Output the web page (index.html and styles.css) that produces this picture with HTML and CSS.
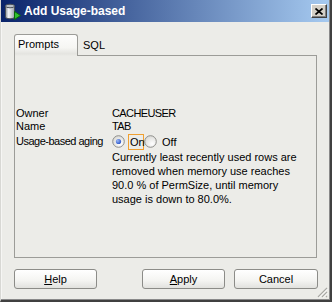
FILE: index.html
```html
<!DOCTYPE html>
<html>
<head>
<meta charset="utf-8">
<title>Add Usage-based</title>
<link rel="stylesheet" href="styles.css">
</head>
<body>
<div class="win">
  <div class="titlebar">
    <svg class="ticon" width="18" height="18" viewBox="0 0 18 18">
      <defs>
        <linearGradient id="cyl" x1="0" y1="0" x2="1" y2="0">
          <stop offset="0" stop-color="#8c949c"/>
          <stop offset="0.35" stop-color="#f4f6f8"/>
          <stop offset="1" stop-color="#9aa2aa"/>
        </linearGradient>
      </defs>
      <path d="M1.5 3 V14 A4.5 1.8 0 0 0 10.5 14 V3 Z" fill="url(#cyl)" stroke="#4a5058"/>
      <ellipse cx="6" cy="3" rx="4.5" ry="1.8" fill="#b8c0c8" stroke="#4a5058"/>
      <path d="M10.5 8.5 L16.5 12.5 L10.5 16.5 Z" fill="#2fc02f" stroke="#0a6a0a" stroke-linejoin="round"/>
    </svg>
    <span class="ttext">Add Usage-based</span>
    <div class="close">
      <svg width="8" height="7" viewBox="0 0 8 7"><path d="M0.5 0.5 L7.5 6.5 M7.5 0.5 L0.5 6.5" stroke="#000" stroke-width="1.7"/></svg>
    </div>
  </div>
  <div class="content">
    <div class="tabs">
      <div class="tab sel">Prompts</div>
      <div class="tab">SQL</div>
    </div>
    <div class="panel">
      <div class="form">
        <div class="lbl">Owner</div><div class="val caps">CACHEUSER</div>
        <div class="lbl">Name</div><div class="val caps">TAB</div>
        <div class="lbl tall">Usage-based aging</div>
        <div class="val radios">
          <svg class="radio" width="13" height="13" viewBox="0 0 13 13">
            <defs>
              <radialGradient id="rg1" cx="0.65" cy="0.7" r="0.8">
                <stop offset="0" stop-color="#ffffff"/>
                <stop offset="1" stop-color="#d6d6d2"/>
              </radialGradient>
              <radialGradient id="dot" cx="0.35" cy="0.35" r="0.7">
                <stop offset="0" stop-color="#9cb8f4"/>
                <stop offset="1" stop-color="#2a55c8"/>
              </radialGradient>
            </defs>
            <circle cx="6.5" cy="6.5" r="5.8" fill="url(#rg1)" stroke="#8e8e8a"/>
            <circle cx="6.5" cy="6.5" r="2.6" fill="url(#dot)"/>
          </svg>
          <span class="rtext focus">On</span>
          <svg class="radio" width="13" height="13" viewBox="0 0 13 13">
            <defs>
              <radialGradient id="rg2" cx="0.65" cy="0.7" r="0.8">
                <stop offset="0" stop-color="#ffffff"/>
                <stop offset="1" stop-color="#d6d6d2"/>
              </radialGradient>
            </defs>
            <circle cx="6.5" cy="6.5" r="5.8" fill="url(#rg2)" stroke="#8e8e8a"/>
          </svg>
          <span class="rtext off">Off</span>
        </div>
        <div></div>
        <div class="desc">Currently least recently used rows are<br>removed when memory use reaches<br>90.0 % of PermSize, until memory<br>usage is down to 80.0%.</div>
      </div>
    </div>
    <div class="buttons">
      <div class="btn"><span class="u">H</span>elp</div>
      <div class="btn apply"><span class="u">A</span>pply</div>
      <div class="btn cancel">Cancel</div>
    </div>
  </div>
  <svg class="grip" width="11" height="11" viewBox="0 0 11 11">
    <path d="M10 1 L1 10 M10 5 L5 10 M10 9 L9 10" stroke="#a8a8a4" stroke-width="1.2"/>
    <path d="M10.8 1.8 L1.8 10.8 M10.8 5.8 L5.8 10.8" stroke="#ffffff" stroke-width="0.8"/>
  </svg>
</div>
</body>
</html>
```

FILE: styles.css
```css
html, body {
  margin: 0;
  padding: 0;
  background: #ecece8;
}
body {
  font-family: "Liberation Sans", Arial, sans-serif;
  font-size: 11px;
  color: #000;
}
.win {
  position: relative;
  width: 332px;
  height: 302px;
  box-sizing: border-box;
  border-left: 1px solid #d8d8d4;
  border-right: 2px solid #404040;
  border-bottom: 2px solid #404040;
  box-shadow: inset -1px -1px 0 #8a8a8a, inset 1px 0 0 #f6f6f4;
  background: #ecece8;
  display: flex;
  flex-direction: column;
  overflow: hidden;
}
.titlebar {
  height: 22px;
  margin-right: 1px;
  flex: none;
  display: flex;
  align-items: center;
  background: linear-gradient(to right, #0a246a, #a6caf0);
}
.ticon {
  margin-left: 3px;
  margin-top: 1px;
  flex: none;
}
.ttext {
  margin-left: 2px;
  color: #fff;
  font-weight: bold;
  font-size: 12px;
  line-height: 22px;
}
.close {
  margin-left: auto;
  margin-right: 2px;
  width: 16px;
  height: 14px;
  box-sizing: border-box;
  background: #d4d0c8;
  border-top: 1px solid #fff;
  border-left: 1px solid #fff;
  border-right: 1px solid #404040;
  border-bottom: 1px solid #404040;
  box-shadow: inset -1px -1px 0 #808080;
  display: flex;
  align-items: center;
  justify-content: center;
  padding-right: 1px;
}
.close svg { display: block; }
.content {
  padding: 12px 0 0 13px;
  display: flex;
  flex-direction: column;
}
.tabs {
  display: flex;
  align-items: flex-start;
  height: 21px;
}
.tab {
  line-height: 13px;
  white-space: nowrap;
}
.tab.sel {
  position: relative;
  z-index: 1;
  width: 64px;
  height: 22px;
  box-sizing: border-box;
  padding: 3px 0 0 3px;
  border: 1px solid #9c9c98;
  border-bottom: none;
  border-radius: 3px 3px 0 0;
  background: linear-gradient(#fdfdfc, #f6f6f3 60%, #e4e4e0 90%, #ecece8);
}
.tab:not(.sel) {
  padding: 5px 0 0 5px;
}
.panel {
  width: 303px;
  height: 203px;
  box-sizing: border-box;
  border: 1px solid #9c9c98;
  padding: 51px 0 0 1px;
}
.form {
  display: grid;
  grid-template-columns: 96px 1fr;
  line-height: 13px;
}
.lbl, .val { white-space: nowrap; }
.caps { letter-spacing: -0.6px; }
.tall { line-height: 17px; letter-spacing: -0.5px; }
.radios {
  display: flex;
  align-items: center;
  height: 17px;
}
.radio { display: block; flex: none; }
.rtext {
  line-height: 14px;
  border: 1px solid transparent;
  padding: 0 0 0 1px;
  width: 13px;
}
.rtext.focus {
  margin-left: 3px;
  border-color: #f0a030;
}
.rtext.off {
  margin-left: 3px;
  width: auto;
}
.desc {
  line-height: 14px;
  white-space: nowrap;
}
.buttons {
  width: 304px;
  margin-top: 11px;
  display: flex;
}
.btn {
  width: 83px;
  height: 20px;
  box-sizing: border-box;
  border: 1px solid #8c8c88;
  border-radius: 3px;
  background: linear-gradient(#ffffff, #f4f4f1 60%, #e2e2de);
  text-align: center;
  line-height: 18px;
}
.btn.apply { margin-left: auto; }
.btn.cancel { margin-left: 9px; width: 84px; }
.u { text-decoration: underline; }
.grip {
  position: absolute;
  right: 2px;
  bottom: 2px;
}
```
